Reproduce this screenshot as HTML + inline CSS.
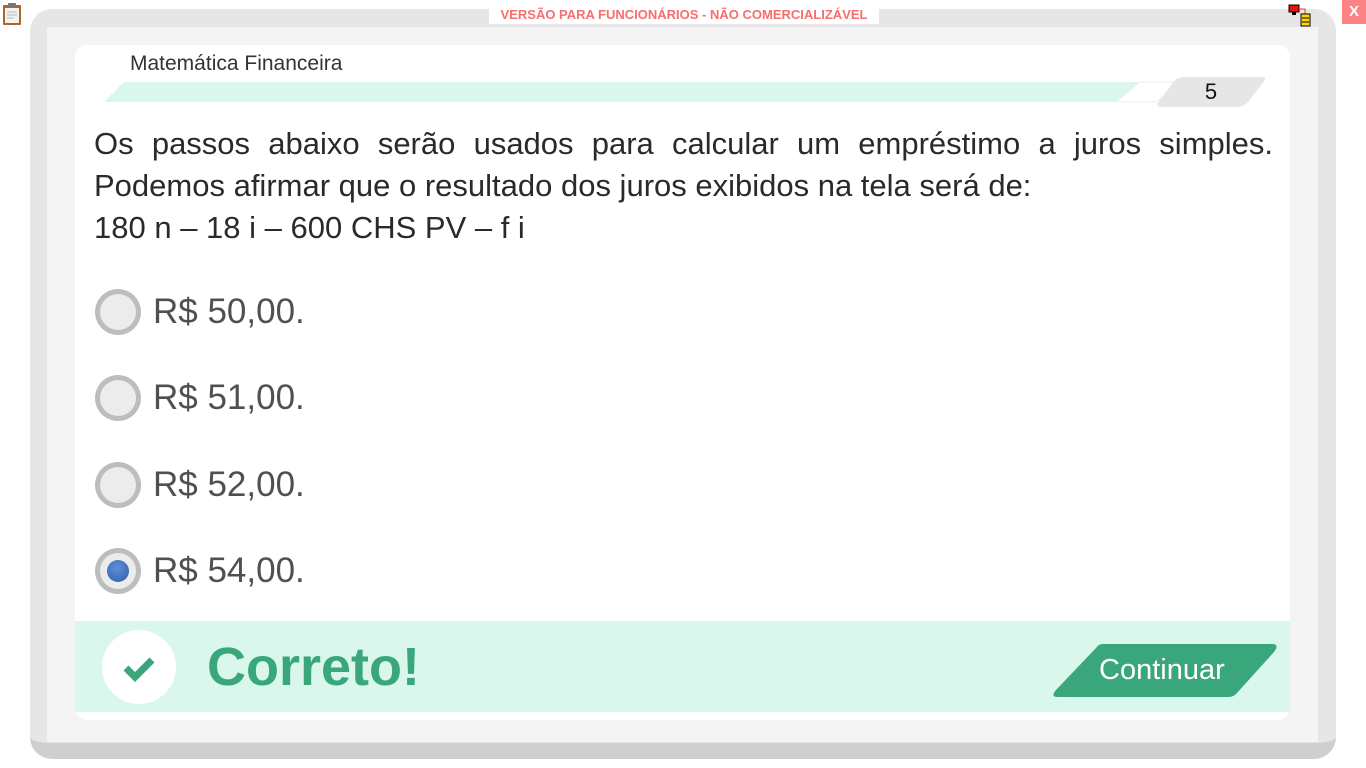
<!DOCTYPE html>
<html><head><meta charset="utf-8"><style>
*{margin:0;padding:0;box-sizing:border-box}
body{width:1366px;height:768px;background:#fff;position:relative;overflow:hidden;font-family:"Liberation Sans",sans-serif}
.frame{position:absolute;left:30px;top:9px;width:1306px;height:750px;background:#e6e6e6;border-radius:22px;border-bottom:16px solid #cfcfcf}
.inner{position:absolute;left:47px;top:27px;width:1271px;height:715px;background:#f4f4f4}
.card{position:absolute;left:75px;top:45px;width:1215px;height:675px;background:#fff;border-radius:12px;overflow:hidden}
.banner{position:absolute;left:489px;top:6px;width:390px;height:18px;background:#fff;color:#f76e6e;font-size:13px;font-weight:bold;text-align:center;line-height:18px}
.x{position:absolute;left:1342px;top:0;width:24px;height:24px;background:#fb8383;color:#fff;font-weight:bold;font-size:15px;text-align:center;line-height:24px}
.subj{position:absolute;left:130px;top:52px;font-size:21px;color:#333}
.q{position:absolute;left:94px;top:123px;width:1179px;font-size:31px;line-height:42px;color:#2a2a2a;text-align:justify;text-align-last:left}
.opt{position:absolute;left:95px;width:300px;height:46px}
.rad{position:absolute;left:0;top:0;width:46px;height:46px;border-radius:50%;background:#bdbdbd}
.rad::after{content:"";position:absolute;left:5px;top:5px;width:36px;height:36px;border-radius:50%;background:#ececec}
.sel::before{content:"";position:absolute;left:12px;top:12px;width:22px;height:22px;border-radius:50%;background:radial-gradient(circle at 45% 35%,#5e8fd6,#2f5ea8);z-index:2}
.opt span{position:absolute;left:58px;top:1px;font-size:35px;color:#505050;line-height:44px}
.green{position:absolute;left:75px;top:621px;width:1215px;height:91px;background:#d9f7ec}
.circ{position:absolute;left:102px;top:630px;width:74px;height:74px;border-radius:50%;background:#fff}
.cor{position:absolute;left:207px;top:636px;font-size:54px;color:#3aa67c;font-weight:bold}
.btn{position:absolute;left:1052px;top:644px;width:226px;height:53px}
.btn span{position:absolute;left:47px;top:10px;font-size:29px;color:#fff}
</style></head><body>
<div class="frame"></div>
<div class="inner"></div>
<div class="card"></div>
<svg style="position:absolute;left:2px;top:2px" width="20" height="24"><rect x="1" y="3" width="18" height="20" rx="1" fill="#a36a2a"/><rect x="3" y="6" width="14" height="15" fill="#f2f2f2"/><rect x="6" y="1" width="8" height="5" rx="1" fill="#777"/><line x1="5" y1="10" x2="15" y2="10" stroke="#bbb"/><line x1="5" y1="13" x2="15" y2="13" stroke="#bbb"/><line x1="5" y1="16" x2="12" y2="16" stroke="#bbb"/></svg>
<div class="banner">VERSÃO PARA FUNCIONÁRIOS - NÃO COMERCIALIZÁVEL</div>
<svg style="position:absolute;left:1288px;top:4px" width="26" height="24"><rect x="1" y="1" width="10" height="7" fill="#e11" stroke="#000"/><rect x="4" y="8" width="4" height="3" fill="#000"/><path d="M11 5H17V10" stroke="#e33" fill="none"/><rect x="13" y="10" width="9" height="12" fill="#ffd700" stroke="#000"/><line x1="14" y1="14" x2="21" y2="14" stroke="#000"/><line x1="14" y1="18" x2="21" y2="18" stroke="#000"/></svg>
<div class="x">X</div>
<div class="subj">Matemática Financeira</div>
<svg style="position:absolute;left:104px;top:76px" width="1164" height="32"><polygon points="20,6 1076,6 1052,26 0,26" fill="#d9f7ec"/><polygon points="1036,6 1076,6 1052,26 1012,26" fill="#fff" stroke="#eee"/><path d="M1074 1 H1158 Q1164 1 1158 8 L1144 26 Q1140 31 1132 31 H1058 Q1050 31 1056 24 L1068 8 Q1072 1 1080 1Z" fill="#e6e6e6"/><text x="1107" y="23" font-size="22" font-family="Liberation Sans" text-anchor="middle" fill="#111">5</text></svg>
<div class="q">Os passos abaixo serão usados para calcular um empréstimo a juros simples. Podemos afirmar que o resultado dos juros exibidos na tela será de:<br>180 n – 18 i – 600 CHS PV – f i</div>
<div class="opt" style="top:289px"><div class="rad"></div><span>R$ 50,00.</span></div>
<div class="opt" style="top:375px"><div class="rad"></div><span>R$ 51,00.</span></div>
<div class="opt" style="top:462px"><div class="rad"></div><span>R$ 52,00.</span></div>
<div class="opt" style="top:548px"><div class="rad sel"></div><span>R$ 54,00.</span></div>
<div class="green"></div>
<div class="circ"><svg width="74" height="74"><path d="M24 38 L33 47 L50 30" stroke="#3aa67c" stroke-width="7" fill="none"/></svg></div>
<div class="cor">Correto!</div>
<div class="btn"><svg width="226" height="53"><path d="M50 0 H220 Q228 0 222 8 L184 50 Q181 53 176 53 H6 Q-2 53 4 46 L44 4 Q47 0 50 0Z" fill="#3aa67c"/></svg><span>Continuar</span></div>
</body></html>
